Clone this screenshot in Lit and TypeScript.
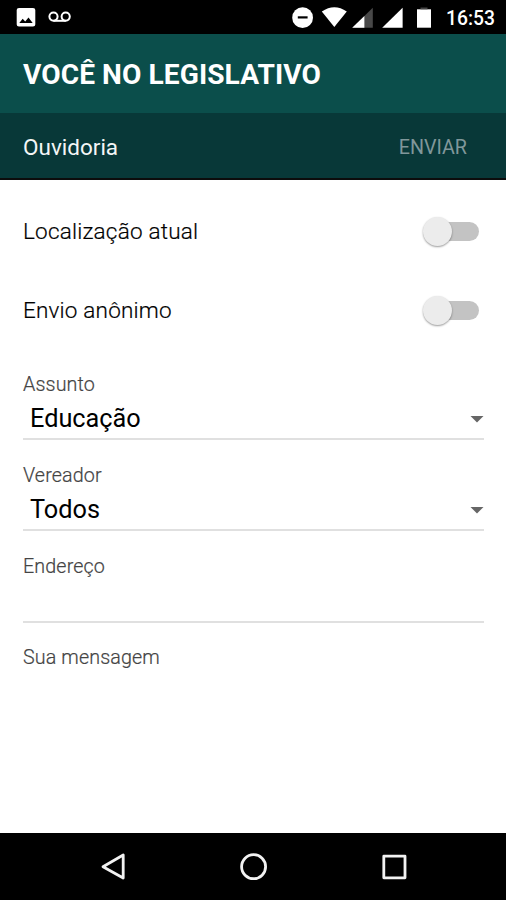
import { LitElement, html, css, nothing } from "lit";
import { customElement, property } from "lit/decorators.js";

@customElement("status-bar")
class StatusBar extends LitElement {
  static styles = css`
    :host { display: block; height: 34px; background: #000; flex: none; }
    .bar { display: block; }
    .row { display: flex; justify-content: space-between; height: 34px; }
    .right { display: flex; }
    .clock { width: 62px; box-sizing: border-box; padding-left: 2px; color: #fff; font: 500 19.3px/37px Roboto, sans-serif; }
  `;
  render() {
    return html`<div class="row">
      <svg class="bar" width="90" height="34" fill="#fff">
        <path fill-rule="evenodd" d="M19 8H33Q35.3 8 35.3 10V24.5Q35.3 26.5 33 26.5H19Q16.7 26.5 16.7 24.5V10Q16.7 8 19 8ZM19.3 23H32.7L28.5 17.5L25.2 21.6L22.7 18.8Z" />
        <g fill="none" stroke="#fff" stroke-width="2">
          <circle cx="53.5" cy="16.6" r="4.1" /><circle cx="65.7" cy="16.6" r="4.1" /><path d="M53.5 20.8H65.7" />
        </g>
      </svg>
      <div class="right">
        <svg class="bar" width="156" height="34" fill="#fff">
          <circle cx="14.6" cy="17.7" r="10.4" /><path d="M9.8 17.4H19.6" stroke="#000" stroke-width="2.2" />
          <path d="M33.8 11.6Q46.3 2.8 58.8 11.6L46.3 27Z" />
          <path d="M84.8 7.8V27.7H64.4Z" fill="#484848" />
          <path d="M76.4 16V27.7H64.2Z" />
          <path d="M114.6 7.8V27.7H94.2Z" />
          <path d="M129 9.3H143V27.7H129Z" /><path d="M132.5 7.5H139.5V9.3H132.5Z" fill="#444" />
        </svg>
        <div class="clock">16:53</div>
      </div>
    </div>`;
  }
}

@customElement("toggle-row")
class ToggleRow extends LitElement {
  @property() label = "";
  static styles = css`
    :host { display: flex; height: 79px; align-items: center; justify-content: space-between; padding: 0 27px 0 23px; }
    .label { font: 300 22.5px/28px Roboto, sans-serif; letter-spacing: .2px; color: #000; padding-bottom: 2px; -webkit-text-stroke: .2px #000; }
    .switch { display: flex; align-items: center; width: 56px; height: 29px; }
    .knob { width: 29px; height: 29px; border-radius: 50%; background: #ececec; box-shadow: 0 1px 2px rgba(0,0,0,.4); z-index: 1; }
    .track { width: 41px; height: 19px; margin-left: -14px; border-radius: 10px; background: #c3c3c3; }
  `;
  render() {
    return html`<span class="label">${this.label}</span>
      <span class="switch"><span class="knob"></span><span class="track"></span></span>`;
  }
}

@customElement("form-field")
class FormField extends LitElement {
  @property() label = "";
  @property() value = "";
  @property({ type: Boolean }) plain = false;
  static styles = css`
    :host { display: flex; flex-direction: column; height: 91.3px; box-sizing: border-box; margin: 0 22px 0 23px; border-bottom: 2px solid #e0e0e0; padding-top: 24px; }
    :host([plain]) { border-bottom: 0; padding-top: 23px; }
    .label { font: 300 19.7px/24px Roboto, sans-serif; letter-spacing: .13px; color: #444; -webkit-text-stroke: .2px #444; }
    .value { display: flex; align-items: center; justify-content: space-between; padding-left: 7px; margin-top: 6px; font: 400 25.3px/32px Roboto, sans-serif; color: #000; }
    .arrow { display: block; }
  `;
  render() {
    return html`<span class="label">${this.label}</span>
      ${this.value
        ? html`<div class="value"><span class="text">${this.value}</span>
            <svg class="arrow" width="14" height="8"><path d="M.5 1H13.5L7 7.6Z" fill="#666" /></svg></div>`
        : nothing}`;
  }
}

@customElement("app-root")
class AppRoot extends LitElement {
  static styles = css`
    :host { display: flex; flex-direction: column; height: 900px; width: 506px; background: #fff; font-family: Roboto, sans-serif; }
    .title { height: 79px; flex: none; padding-left: 23px; background: #0b4e4b; color: #fff; font-size: 28.1px; font-weight: 700; line-height: 81px; letter-spacing: .08px; }
    .sub { height: 67px; flex: none; box-sizing: border-box; display: flex; justify-content: space-between; padding: 0 39px 0 23px; background: #083838; border-bottom: 2px solid #0c0c0c; line-height: 68px; }
    .name { font-size: 22.5px; color: #f4f6f6; }
    .send { font-size: 19.7px; line-height: 70px; color: #80979a; }
    .form { flex: 1; padding-top: 12px; }
    .fields { margin-top: -1.3px; }
    .nav { height: 67px; flex: none; background: #000; display: flex; }
    .icons { display: block; }
  `;
  render() {
    return html`
      <status-bar></status-bar>
      <div class="title">VOCÊ NO LEGISLATIVO</div>
      <div class="sub"><span class="name">Ouvidoria</span><span class="send">ENVIAR</span></div>
      <div class="form">
        <toggle-row label="Localização atual"></toggle-row>
        <toggle-row label="Envio anônimo"></toggle-row>
        <div class="fields">
          <form-field label="Assunto" value="Educação"></form-field>
          <form-field label="Vereador" value="Todos"></form-field>
          <form-field label="Endereço"></form-field>
          <form-field plain label="Sua mensagem"></form-field>
        </div>
      </div>
      <div class="nav">
        <svg class="icons" width="506" height="67" fill="none" stroke="#f2f2f2" stroke-width="2.8" stroke-linejoin="round">
          <path d="M123.2 22V45L103 33.7Z" />
          <circle cx="253.6" cy="33.7" r="12" />
          <rect x="383.8" y="23.2" width="21.2" height="21.6" />
        </svg>
      </div>`;
  }
}
